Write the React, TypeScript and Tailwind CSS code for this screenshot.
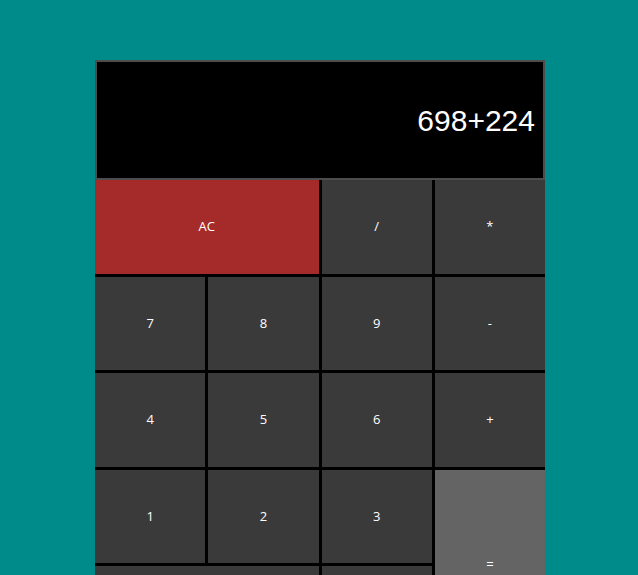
const KEYS = [
  { label: 'AC', span: 'col-span-2', color: 'bg-[#a52a2a]' },
  { label: '/' },
  { label: '*' },
  { label: '7' },
  { label: '8' },
  { label: '9' },
  { label: '-' },
  { label: '4' },
  { label: '5' },
  { label: '6' },
  { label: '+' },
  { label: '1' },
  { label: '2' },
  { label: '3' },
  { label: '=', span: 'row-span-2', color: 'bg-[#656464]' },
  { label: '0', span: 'col-span-2' },
  { label: '.' },
];

export default function App() {
  return (
    <div className="min-h-screen bg-[#008b8b] pt-[60px] pl-[95px]">
      <div className="w-[450px]">
        {/* Display */}
        <div className="h-[120px] bg-black border-2 border-[#4d4d4d] flex items-center justify-end pr-[8px]">
          <span className="text-white text-[30px] font-['Liberation_Sans',Arial,sans-serif]">698+224</span>
        </div>

        {/* Keypad */}
        <div className="grid grid-cols-4 gap-[3px] auto-rows-[93.5px] bg-black">
          {KEYS.map((k) => (
            <button
              key={k.label}
              className={`${k.span ?? ''} ${k.color ?? 'bg-[#3a3a3a]'} text-white text-[13px] font-['Open_Sans','Noto_Sans',sans-serif]`}
            >
              {k.label}
            </button>
          ))}
        </div>
      </div>
    </div>
  );
}
